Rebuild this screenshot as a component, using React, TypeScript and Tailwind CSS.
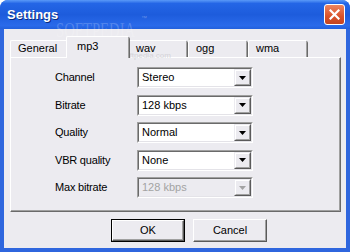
import React from "react";

const font = "font-['Liberation_Sans',Arial,sans-serif]";

function Arrow({ disabled }: { disabled?: boolean }) {
  return (
    <div className="w-[17px] h-[17px] border border-t-[#ecebf0] border-l-[#ecebf0] border-r-[#5a5a5a] border-b-[#5a5a5a]">
      <div className="w-full h-full border border-t-white border-l-white border-r-[#a0a0a0] border-b-[#a0a0a0] bg-[#ecebf0] flex items-center justify-center">
        <svg width="7" height="4" viewBox="0 0 7 4">
          <path d="M0 0h7L3.5 4z" fill={disabled ? "#a3a3a3" : "#000"} />
        </svg>
      </div>
    </div>
  );
}

function Combo({ value, disabled }: { value: string; disabled?: boolean }) {
  return (
    <div className="w-[116px] h-[21px] border border-t-[#a0a0a0] border-l-[#a0a0a0] border-r-white border-b-white">
      <div
        className={`w-full h-full border border-t-[#6a6a6a] border-l-[#6a6a6a] border-r-[#e4e3e8] border-b-[#e4e3e8] flex items-center ${
          disabled ? "bg-[#ecebf0]" : "bg-white"
        }`}
      >
        <span className={`flex-1 pl-[3px] text-[11px] leading-none ${disabled ? "text-[#a3a3a3]" : "text-black"}`}>
          {value}
        </span>
        <Arrow disabled={disabled} />
      </div>
    </div>
  );
}

function Tab({ label, selected, w }: { label: string; selected?: boolean; w: string }) {
  if (selected) {
    return (
      <div className={`relative z-10 -mx-[2px] -mb-[1px] h-[22px] ${w} flex`}>
        <div className="flex-1 border-l border-t border-white rounded-tl-[2px] bg-[#ecebf0] flex items-center pl-[10px] pb-[3px] text-[11px] text-black">
          {label}
        </div>
        <div className="w-[2px] border-r border-r-[#6a6a6a] bg-[#ecebf0] shadow-[inset_-1px_0_0_#a0a0a0] mt-[1px] rounded-tr-[2px]" />
      </div>
    );
  }
  return (
    <div className={`h-[17px] ${w} flex`}>
      <div className="flex-1 border-l border-t border-white rounded-tl-[2px] flex items-center pl-[7px] pb-[1px] text-[11px] text-black">
        {label}
      </div>
      <div className="w-[2px] border-r border-r-[#6a6a6a] shadow-[inset_-1px_0_0_#a0a0a0] mt-[1px] rounded-tr-[2px]" />
    </div>
  );
}

export default function App() {
  const rows: [string, string, boolean?][] = [
    ["Channel", "Stereo"],
    ["Bitrate", "128 kbps"],
    ["Quality", "Normal"],
    ["VBR quality", "None"],
    ["Max bitrate", "128 kbps", true],
  ];
  return (
    <div className={`${font} w-[350px] h-[252px] relative flex flex-col rounded-t-[8px] overflow-hidden bg-[#2f66de]`}>
      {/* title bar */}
      <div className="h-[29px] flex items-center pl-[7px] pr-[5px] bg-[linear-gradient(to_bottom,#5a9af8_0%,#2466e6_12%,#1d5cdc_50%,#2a6aea_88%,#2260dc_100%)]">
        <span className="text-white font-bold text-[13px] [text-shadow:1px_1px_0_#0b2a7a]">Settings</span>
        <div className="ml-auto w-[21px] h-[21px] rounded-[3px] border border-white bg-[linear-gradient(to_bottom,#ee8560,#d9522a_60%,#c4441f)] flex items-center justify-center">
          <svg width="11" height="11" viewBox="0 0 11 11">
            <path d="M1.5 1.5l8 8M9.5 1.5l-8 8" stroke="#fff" strokeWidth="2.2" strokeLinecap="square" />
          </svg>
        </div>
      </div>

      {/* body */}
      <div className="flex-1 mx-[4px] mb-[4px] bg-[#ecebf0] flex flex-col pt-[7px] pl-[6px] pr-[5px]">
        {/* tabs */}
        <div className="h-[21px] flex items-end">
          <Tab label="General" w="w-[58px]" />
          <Tab label="mp3" w="w-[64px]" selected />
          <Tab label="wav" w="w-[60px]" />
          <Tab label="ogg" w="w-[60px]" />
          <Tab label="wma" w="w-[60px]" />
        </div>
        {/* panel */}
        <div className="h-[155px] border-l border-t border-white border-r-[#6a6a6a] border-b-[#6a6a6a] border-r border-b">
          <div className="w-full h-full shadow-[inset_-1px_-1px_0_#a0a0a0] pt-[9px] pl-[44px] grid grid-cols-[82px_116px] gap-y-[6.5px] content-start">
            {rows.map(([l, v, d]) => (
              <React.Fragment key={l}>
                <div className="h-[21px] flex items-center text-[11px] tracking-[-0.2px] text-black">{l}</div>
                <Combo value={v} disabled={d} />
              </React.Fragment>
            ))}
          </div>
        </div>
        {/* buttons */}
        <div className="mt-[7px] ml-[101px] flex gap-[8px]">
          <div className="w-[74px] h-[23px] border border-black">
            <div className="w-full h-full border border-t-white border-l-white border-r-[#5a5a5a] border-b-[#5a5a5a]">
              <div className="w-full h-full shadow-[inset_-1px_-1px_0_#a0a0a0] flex items-center justify-center text-[11px] text-black">
                OK
              </div>
            </div>
          </div>
          <div className="w-[74px] h-[23px] border border-t-white border-l-white border-r-[#5a5a5a] border-b-[#5a5a5a]">
            <div className="w-full h-full shadow-[inset_-1px_-1px_0_#a0a0a0] flex items-center justify-center text-[11px] text-black">
              Cancel
            </div>
          </div>
        </div>
      </div>

      {/* watermark overlay */}
      <div className="absolute left-[56px] top-[20px] text-[21px] leading-none font-['Liberation_Serif',serif] text-white/20 origin-left scale-x-[0.7] pointer-events-none">
        SOFTPEDIA
      </div>
      <div className="absolute left-[141px] top-[15px] text-[6px] leading-none text-white/30 pointer-events-none">™</div>
      <div className="absolute left-[102px] top-[52px] text-[8px] leading-none text-[#c8c7cc]/70 pointer-events-none">www.softpedia.com</div>
    </div>
  );
}
